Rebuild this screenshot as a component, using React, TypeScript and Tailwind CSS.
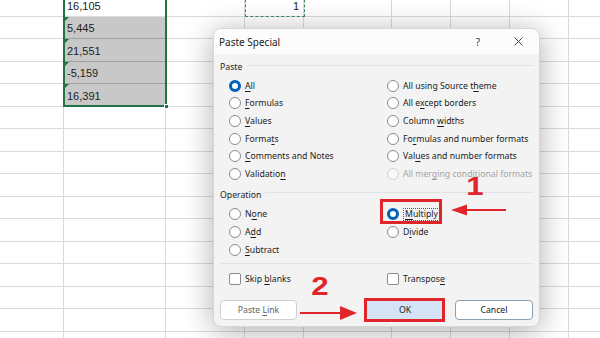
import type { ReactNode } from "react";

const GRID_COLS = "grid grid-cols-[64px_102px_79px_59px_88px_59px_59px_59px_59px]";
const NUMBERS = ["16,105", "5,445", "21,551", "-5,159", "16,391"];

type Opt = { label: string; u: number; checked?: boolean; disabled?: boolean; focus?: boolean };

const pasteLeft: Opt[] = [
  { label: "All", u: 0, checked: true },
  { label: "Formulas", u: 0 },
  { label: "Values", u: 0 },
  { label: "Formats", u: 5 },
  { label: "Comments and Notes", u: 0 },
  { label: "Validation", u: 9 },
];

const pasteRight: Opt[] = [
  { label: "All using Source theme", u: 18 },
  { label: "All except borders", u: 5 },
  { label: "Column widths", u: 7 },
  { label: "Formulas and number formats", u: 2 },
  { label: "Values and number formats", u: 3 },
  { label: "All merging conditional formats", u: 7, disabled: true },
];

const opLeft: Opt[] = [
  { label: "None", u: 1 },
  { label: "Add", u: 1 },
  { label: "Subtract", u: 0 },
];

const opRight: Opt[] = [
  { label: "Multiply", u: 0, checked: true, focus: true },
  { label: "Divide", u: 1 },
];

const Underlined = ({ text, u }: { text: string; u: number }) => (
  <>
    {text.slice(0, u)}
    <span className="underline underline-offset-[1.5px] decoration-[0.8px]">{text[u]}</span>
    {text.slice(u + 1)}
  </>
);

const Radio = ({ opt }: { opt: Opt }) => {
  let circle = "w-[12px] h-[12px] rounded-full border border-[#8b8b8b] bg-white";
  if (opt.checked) circle = "w-[12px] h-[12px] rounded-full border-[3px] border-[#005fb8] bg-white";
  if (opt.disabled) circle = "w-[12px] h-[12px] rounded-full border border-[#d2d2d2] bg-[#f7f7f7]";

  return (
    <div className="flex items-center h-[17.6px] gap-[4px]">
      <div className={circle} />
      <span
        className={
          opt.focus
            ? "border border-dotted border-[#555] px-[1px] leading-[11px] text-[#1b1b1b]"
            : opt.disabled
              ? "text-[#a3a3a3]"
              : "text-[#1b1b1b]"
        }
      >
        <Underlined text={opt.label} u={opt.u} />
      </span>
    </div>
  );
};

const GroupLabel = ({ children }: { children: ReactNode }) => (
  <div className="flex items-center h-[12px] gap-[4px]">
    <span className="text-[#1b1b1b] leading-[12px]">{children}</span>
    <div className="flex-1 h-px bg-[#e3e3e3] -mt-[4px]" />
  </div>
);

const Sheet = () => {
  const rows = Array.from({ length: 16 }, (_, i) => i);
  return (
    <div className="-mt-[6px] font-['Liberation_Sans',sans-serif] text-[11px] text-[#222]">
      {rows.map((r) => (
        <div key={r} className={`${GRID_COLS} ${r % 2 === 0 ? "h-[23px]" : "h-[22px]"}`}>
          {Array.from({ length: 9 }, (_, c) => {
            if (c === 1 && r < 5) {
              const grey = r > 0;
              return (
                <div
                  key={c}
                  className={
                    grey
                      ? "relative flex items-center pl-[3px] pt-[2px] border-r border-b border-[#9f9f9f] bg-[#c8c8c8]"
                      : "relative flex items-center pl-[3px] pt-[2px] border-r border-b border-[#dadada] bg-white"
                  }
                >
                  {grey && (
                    <svg className="absolute left-0 top-0" width="5" height="5" viewBox="0 0 5 5">
                      <polygon points="0,0 5,0 0,5" fill="#1e7145" />
                    </svg>
                  )}
                  {NUMBERS[r]}
                </div>
              );
            }
            if (c === 3 && r === 0) {
              return (
                <div key={c} className="flex items-center justify-end pr-[4px] pt-[2px] border-r border-b border-[#dadada]">
                  1
                </div>
              );
            }
            return <div key={c} className="border-r border-b border-[#dadada]" />;
          })}
        </div>
      ))}
    </div>
  );
};

const Dialog = () => (
  <div className="absolute left-[213px] top-[28px] w-[327px] h-[299px] rounded-[8px] overflow-hidden bg-[#f3f3f3] border border-[#d6d6d6] shadow-[0_4px_30px_rgba(0,0,0,0.32)] font-['Noto_Sans',sans-serif] text-[8.7px] leading-[12px]">
    {/* title bar */}
    <div className="flex items-center h-[25px] bg-[#fcfcfc] text-[#1b1b1b]">
      <span className="flex-1 pl-[5px] text-[10px]">Paste Special</span>
      <span className="w-[40px] text-center text-[10px] text-[#333]">?</span>
      <span className="w-[41px] flex justify-center">
        <svg width="9" height="9" viewBox="0 0 9 9">
          <path d="M0.5 0.5 L8.5 8.5 M8.5 0.5 L0.5 8.5" stroke="#333" strokeWidth="0.9" />
        </svg>
      </span>
    </div>

    {/* body */}
    <div className="pl-[6px] pr-[5px] pt-[7px]">
      <GroupLabel>Paste</GroupLabel>
      <div className="mt-[4px] pl-[9px] grid grid-cols-[158px_1fr]">
        <div>
          {pasteLeft.map((o) => (
            <Radio key={o.label} opt={o} />
          ))}
        </div>
        <div>
          {pasteRight.map((o) => (
            <Radio key={o.label} opt={o} />
          ))}
        </div>
      </div>

      <div className="mt-[6px]">
        <GroupLabel>Operation</GroupLabel>
      </div>
      <div className="mt-[5px] pl-[9px] grid grid-cols-[158px_1fr]">
        <div>
          {opLeft.map((o) => (
            <Radio key={o.label} opt={o} />
          ))}
        </div>
        <div>
          {opRight.map((o) => (
            <Radio key={o.label} opt={o} />
          ))}
        </div>
      </div>

      <div className="mt-[5px] h-px bg-[#e3e3e3]" />

      <div className="mt-[6px] pl-[9px] grid grid-cols-[158px_1fr] text-[#1b1b1b]">
        <div className="flex items-center h-[18px] gap-[4px]">
          <div className="w-[12px] h-[12px] rounded-[2px] border border-[#8b8b8b] bg-white" />
          <span>
            <Underlined text="Skip blanks" u={5} />
          </span>
        </div>
        <div className="flex items-center h-[18px] gap-[4px]">
          <div className="w-[12px] h-[12px] rounded-[2px] border border-[#8b8b8b] bg-white" />
          <span>
            <Underlined text="Transpose" u={8} />
          </span>
        </div>
      </div>

      <div className="mt-[12px] flex items-center justify-between pr-[1px]">
        <button
          type="button"
          className="w-[77px] h-[20px] rounded-[4px] border border-[#d0d0d0] bg-white text-[#5f5f5f]"
        >
          <Underlined text="Paste Link" u={6} />
        </button>
        <div className="flex gap-[12px]">
          <button type="button" className="w-[76px] h-[20px] rounded-[4px] bg-[#d4e3f6] text-[#1b1b1b]">
            OK
          </button>
          <button
            type="button"
            className="w-[78px] h-[20px] rounded-[4px] border border-[#8aa1b2] bg-white text-[#1b1b1b]"
          >
            Cancel
          </button>
        </div>
      </div>
    </div>
  </div>
);

const App = () => {
  return (
    <div className="relative w-[600px] h-[338px] overflow-hidden bg-white">
      <Sheet />

      {/* selection + copy marquee */}
      <div className="absolute left-[63px] top-[-10px] w-[104px] h-[117px] border-2 border-[#217346]" />
      <div className="absolute left-[164px] top-[104px] w-[5px] h-[5px] bg-[#217346] border border-white" />
      <div className="absolute left-[245px] top-[-10px] w-[60px] h-[27px] border-[1.5px] border-dashed border-[#3f8a5e]" />

      <Dialog />

      {/* annotations */}
      <div className="absolute left-[380px] top-[199px] w-[62px] h-[25px] border-[3px] border-[#e0252b]" />
      <div className="absolute left-[364px] top-[298px] w-[81px] h-[24px] border-[3px] border-[#e0252b]" />

      <span className="absolute left-[468px] top-[174px] text-[25px] leading-none font-bold text-[#e0252b] font-['Liberation_Sans',sans-serif] scale-x-[1.25]">
        1
      </span>
      <span className="absolute left-[313px] top-[274px] text-[25px] leading-none font-bold text-[#e0252b] font-['Liberation_Sans',sans-serif] scale-x-[1.25]">
        2
      </span>

      <svg className="absolute left-[450px] top-[203px]" width="58" height="14" viewBox="0 0 58 14">
        <polygon points="1,7 17,1.5 17,12.5" fill="#e0252b" />
        <line x1="16" y1="7" x2="56" y2="7" stroke="#e0252b" strokeWidth="2.2" />
      </svg>
      <svg className="absolute left-[299px] top-[305px]" width="60" height="16" viewBox="0 0 60 16">
        <line x1="1" y1="8" x2="43" y2="8" stroke="#e0252b" strokeWidth="2.2" />
        <polygon points="58,8 41,1 41,15" fill="#e0252b" />
      </svg>
    </div>
  );
};

export default App;
